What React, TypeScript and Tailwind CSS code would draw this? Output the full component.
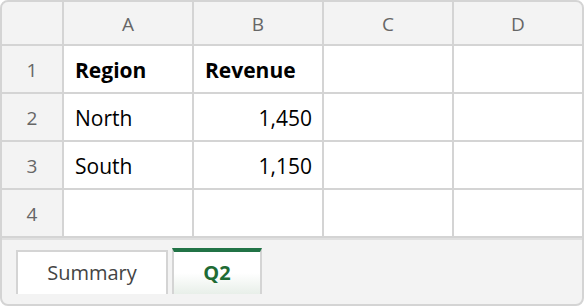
import { Fragment } from "react";

const COLS = ["A", "B", "C", "D"];

const ROWS: { n: number; cells: (string | null)[]; bold?: boolean }[] = [
  { n: 1, cells: ["Region", "Revenue", null, null], bold: true },
  { n: 2, cells: ["North", "1,450", null, null] },
  { n: 3, cells: ["South", "1,150", null, null] },
  { n: 4, cells: [null, null, null, null] },
];

// numbers sit right, words sit left
const isNum = (v: string) => /^[\d,.]+$/.test(v);

export default function App() {
  return (
    <div className="w-[584px] h-[306px] bg-white" style={{ fontFamily: '"Open Sans", "Noto Sans", sans-serif' }}>
      <div className="w-full h-full flex flex-col border-2 border-[#d4d4d4] rounded-lg overflow-hidden bg-[#f3f3f3]">
        {/* grid */}
        <div className="grid grid-cols-[60px_repeat(4,128px)] grid-rows-[42px_repeat(4,46px)] gap-[2px] bg-[#d4d4d4] border-b-2 border-[#d4d4d4]">
          <div className="bg-[#f3f3f3]" />
          {COLS.map((c) => (
            <div key={c} className="bg-[#f3f3f3] flex items-center justify-center pt-[3px] text-[19px] text-[#666]">
              {c}
            </div>
          ))}
          {ROWS.map((r) => (
            <Fragment key={r.n}>
              <div className="bg-[#f3f3f3] flex items-center justify-center pt-[3px] text-[19px] text-[#666]">
                {r.n}
              </div>
              {r.cells.map((v, i) => (
                <div
                  key={i}
                  className={`bg-white flex items-center pt-[3px] px-[11px] text-[21px] text-black ${
                    v && isNum(v) ? "justify-end pr-[10px]" : ""
                  } ${r.bold ? "font-bold" : ""}`}
                >
                  {v}
                </div>
              ))}
            </Fragment>
          ))}
        </div>

        {/* sheet tabs */}
        <div className="flex-1 border-t-2 border-[#e0e0e0] flex items-start pt-[8px] pl-[14px] gap-[4px]">
          <div className="mt-[2px] w-[152px] h-[44px] bg-white border-2 border-b-0 border-[#d4d4d4] flex items-center justify-center text-[20px] text-[#444]">
            Summary
          </div>
          <div className="w-[90px] h-[46px] border-t-4 border-t-[#217346] border-x-2 border-x-[#d4d4d4] bg-gradient-to-b from-white from-50% to-[#e8efe9] flex items-center justify-center text-[20px] font-bold text-[#1e6b34]">
            Q2
          </div>
        </div>
      </div>
    </div>
  );
}
